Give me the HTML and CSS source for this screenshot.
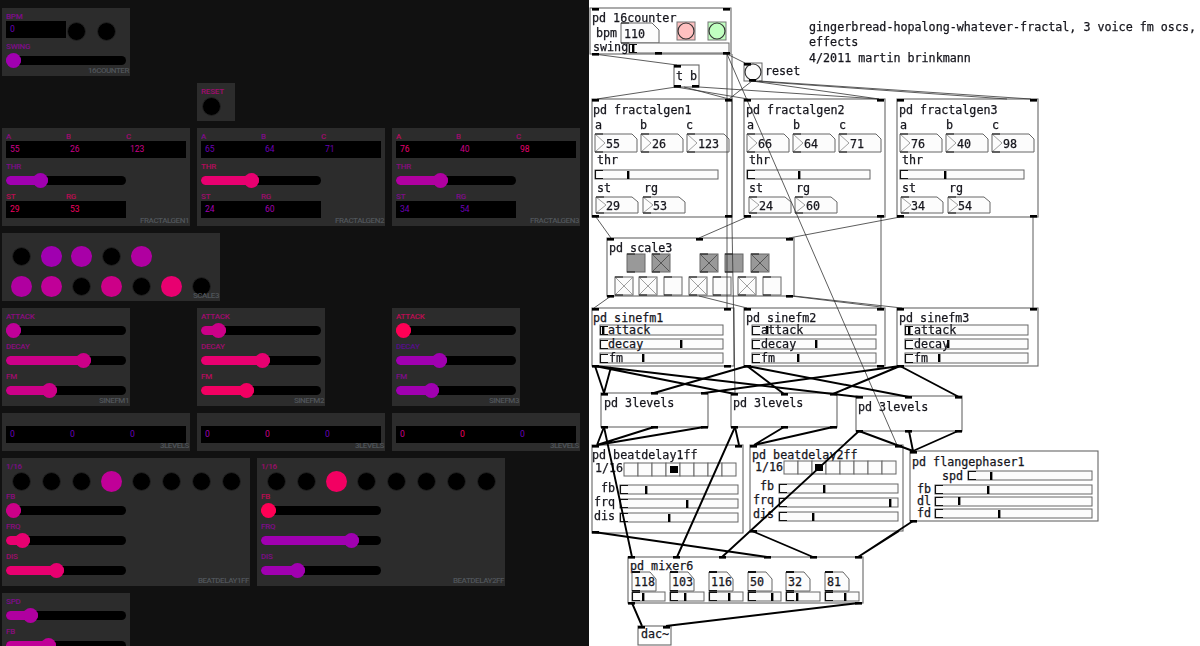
FILE: index.html
```html
<!DOCTYPE html>
<html lang="en">
<head>
<meta charset="UTF-8" />
<title>gingerbread fractal patch</title>
<link rel="stylesheet" href="styles.css">
</head>
<body>

<!-- control surface -->
<div class="ui">

  <div class="row">
    <div class="panel w128">
      <div class="line">
        <div class="fld"><span class="lbl c1">BPM</span><span class="val c0">0</span></div>
        <div class="cell left"><span class="dot"></span></div>
        <div class="cell left"><span class="dot"></span></div>
      </div>
      <div class="ctl"><span class="lbl c1">SWING</span><div class="slider"><div class="fill c1" style="width:15px"></div></div></div>
      <span class="tag">16COUNTER</span>
    </div>
  </div>

  <div class="row">
    <div class="panel w38 col2">
      <div class="line">
        <div class="cell left"><span class="lbl lbl-abs c3">RESET</span><span class="dot"></span></div>
      </div>
    </div>
  </div>

  <div class="row">
    <div class="panel">
      <div class="line">
        <div class="fld"><span class="lbl c2">A</span><span class="val c3">55</span></div>
        <div class="fld"><span class="lbl c3">B</span><span class="val c3">26</span></div>
        <div class="fld"><span class="lbl c3">C</span><span class="val c3">123</span></div>
      </div>
      <div class="ctl"><span class="lbl c1">THR</span><div class="slider"><div class="fill c1" style="width:42px"></div></div></div>
      <div class="line">
        <div class="fld"><span class="lbl c5">ST</span><span class="val c5">29</span></div>
        <div class="fld"><span class="lbl c5">RG</span><span class="val c5">53</span></div>
      </div>
      <span class="tag">FRACTALGEN1</span>
    </div>
    <div class="panel">
      <div class="line">
        <div class="fld"><span class="lbl c1">A</span><span class="val c0">65</span></div>
        <div class="fld"><span class="lbl c1">B</span><span class="val c0">64</span></div>
        <div class="fld"><span class="lbl c3">C</span><span class="val c0">71</span></div>
      </div>
      <div class="ctl"><span class="lbl c4">THR</span><div class="slider"><div class="fill c4" style="width:58px"></div></div></div>
      <div class="line">
        <div class="fld"><span class="lbl c3">ST</span><span class="val c1">24</span></div>
        <div class="fld"><span class="lbl c3">RG</span><span class="val c1">60</span></div>
      </div>
      <span class="tag">FRACTALGEN2</span>
    </div>
    <div class="panel">
      <div class="line">
        <div class="fld"><span class="lbl c4">A</span><span class="val c4">76</span></div>
        <div class="fld"><span class="lbl c3">B</span><span class="val c3">40</span></div>
        <div class="fld"><span class="lbl c3">C</span><span class="val c4">98</span></div>
      </div>
      <div class="ctl"><span class="lbl c2">THR</span><div class="slider"><div class="fill c2" style="width:52px"></div></div></div>
      <div class="line">
        <div class="fld"><span class="lbl c1">ST</span><span class="val c0">34</span></div>
        <div class="fld"><span class="lbl c1">RG</span><span class="val c0">54</span></div>
      </div>
      <span class="tag">FRACTALGEN3</span>
    </div>
  </div>

  <div class="row">
    <div class="panel w218">
      <div class="line">
        <div class="cell"><span class="dot"></span></div>
        <div class="cell"><span class="dot on c1"></span></div>
        <div class="cell"><span class="dot on c1b"></span></div>
        <div class="cell"><span class="dot"></span></div>
        <div class="cell"><span class="dot on c2"></span></div>
      </div>
      <div class="line">
        <div class="cell"><span class="dot on c2"></span></div>
        <div class="cell"><span class="dot on c2b"></span></div>
        <div class="cell"><span class="dot"></span></div>
        <div class="cell"><span class="dot on c3"></span></div>
        <div class="cell"><span class="dot"></span></div>
        <div class="cell"><span class="dot on c4"></span></div>
        <div class="cell"><span class="dot"></span></div>
      </div>
      <span class="tag">SCALE3</span>
    </div>
  </div>

  <div class="row">
    <div class="panel w128">
      <div class="ctl"><span class="lbl c2">ATTACK</span><div class="slider"><div class="fill c2b" style="width:15px"></div></div></div>
      <div class="ctl"><span class="lbl c2">DECAY</span><div class="slider"><div class="fill c3" style="width:85px"></div></div></div>
      <div class="ctl"><span class="lbl c3">FM</span><div class="slider"><div class="fill c3" style="width:51px"></div></div></div>
      <span class="tag">SINEFM1</span>
    </div>
    <div class="panel w128">
      <div class="ctl"><span class="lbl c3">ATTACK</span><div class="slider"><div class="fill c3" style="width:25px"></div></div></div>
      <div class="ctl"><span class="lbl c3">DECAY</span><div class="slider"><div class="fill c4" style="width:69px"></div></div></div>
      <div class="ctl"><span class="lbl c4">FM</span><div class="slider"><div class="fill c5" style="width:53px"></div></div></div>
      <span class="tag">SINEFM2</span>
    </div>
    <div class="panel w128">
      <div class="ctl"><span class="lbl c5">ATTACK</span><div class="slider"><div class="fill c6" style="width:15px"></div></div></div>
      <div class="ctl"><span class="lbl c0">DECAY</span><div class="slider"><div class="fill c1" style="width:51px"></div></div></div>
      <div class="ctl"><span class="lbl c1">FM</span><div class="slider"><div class="fill c1" style="width:43px"></div></div></div>
      <span class="tag">SINEFM3</span>
    </div>
  </div>

  <div class="row">
    <div class="panel">
      <div class="line">
        <div class="fld"><span class="lbl"></span><span class="val c0">0</span></div>
        <div class="fld"><span class="lbl"></span><span class="val c0">0</span></div>
        <div class="fld"><span class="lbl"></span><span class="val c0">0</span></div>
      </div>
      <span class="tag">3LEVELS</span>
    </div>
    <div class="panel">
      <div class="line">
        <div class="fld"><span class="lbl"></span><span class="val c1">0</span></div>
        <div class="fld"><span class="lbl"></span><span class="val c3">0</span></div>
        <div class="fld"><span class="lbl"></span><span class="val c0">0</span></div>
      </div>
      <span class="tag">3LEVELS</span>
    </div>
    <div class="panel">
      <div class="line">
        <div class="fld"><span class="lbl"></span><span class="val c3">0</span></div>
        <div class="fld"><span class="lbl"></span><span class="val c5">0</span></div>
        <div class="fld"><span class="lbl"></span><span class="val c0">0</span></div>
      </div>
      <span class="tag">3LEVELS</span>
    </div>
  </div>

  <div class="row row-flex">
    <div class="panel w248">
      <div class="line">
        <span class="lbl lbl-abs c1">1/16</span>
        <div class="cell"><span class="dot"></span></div>
        <div class="cell"><span class="dot"></span></div>
        <div class="cell"><span class="dot"></span></div>
        <div class="cell"><span class="dot on c2b"></span></div>
        <div class="cell"><span class="dot"></span></div>
        <div class="cell"><span class="dot"></span></div>
        <div class="cell"><span class="dot"></span></div>
        <div class="cell"><span class="dot"></span></div>
      </div>
      <div class="ctl"><span class="lbl c2">FB</span><div class="slider"><div class="fill c3" style="width:15px"></div></div></div>
      <div class="ctl"><span class="lbl c2">FRQ</span><div class="slider"><div class="fill c4" style="width:24px"></div></div></div>
      <div class="ctl"><span class="lbl c3">DIS</span><div class="slider"><div class="fill c4" style="width:58px"></div></div></div>
      <span class="tag">BEATDELAY1FF</span>
    </div>
    <div class="panel w248">
      <div class="line">
        <span class="lbl lbl-abs c3">1/16</span>
        <div class="cell"><span class="dot"></span></div>
        <div class="cell"><span class="dot"></span></div>
        <div class="cell"><span class="dot on c5"></span></div>
        <div class="cell"><span class="dot"></span></div>
        <div class="cell"><span class="dot"></span></div>
        <div class="cell"><span class="dot"></span></div>
        <div class="cell"><span class="dot"></span></div>
        <div class="cell"><span class="dot"></span></div>
      </div>
      <div class="ctl"><span class="lbl c5">FB</span><div class="slider"><div class="fill c6" style="width:15px"></div></div></div>
      <div class="ctl"><span class="lbl c1">FRQ</span><div class="slider"><div class="fill c1" style="width:98px"></div></div></div>
      <div class="ctl"><span class="lbl c1">DIS</span><div class="slider"><div class="fill c1" style="width:44px"></div></div></div>
      <span class="tag">BEATDELAY2FF</span>
    </div>
  </div>

  <div class="row">
    <div class="panel w128">
      <div class="ctl"><span class="lbl c1">SPD</span><div class="slider"><div class="fill c2" style="width:32px"></div></div></div>
      <div class="ctl"><span class="lbl c2">FB</span><div class="slider"><div class="fill c2b" style="width:50px"></div></div></div>
    </div>
  </div>

</div>

<!-- pd patch, a free canvas: boxes first, then wires and ports on top -->
<div class="patch">
<svg class="canvas" width="611" height="646" viewBox="0 0 611 646">
  <defs>
    <path id="br" class="mark" d="M8 .5H.5V8.5H8"/>
    <g id="n18"><path class="w" d="M0 0H37L42 5V18H0Z"/><path class="tri" d="M0 0L10 9L0 18"/><path class="mark" d="M0 0H8M0 18H8"/></g>
    <g id="n16"><path class="w" d="M0 0H36L42 5V16H0Z"/><path class="tri" d="M0 0L10 8L0 16"/><path class="mark" d="M0 0H8M0 16H8"/></g>
    <g id="n24"><path class="w" d="M0 0H18L24 7V19H0Z"/><path class="mark thickmark" d="M0 0H8M0 19H8"/></g>
    <g id="tg"><rect class="w" width="18" height="18"/><path class="mark" d="M0 0H8M0 18H8"/></g>
    <g id="tgx"><rect class="w" width="18" height="18"/><path class="tri" d="M1 1L17 17M17 1L1 17"/><path class="mark" d="M0 0H8M0 18H8"/></g>
    <g id="tgd"><rect class="g" width="18" height="18"/><path class="mark" d="M0 0H8M0 18H8"/></g>
    <g id="tgdx"><rect class="g" width="18" height="18"/><path class="tri dark" d="M1 1L17 17M17 1L1 17"/><path class="mark" d="M0 0H8M0 18H8"/></g>
    <rect id="c" class="w" width="14" height="13"/>
    <rect id="p" class="port" width="7" height="2.6"/>
    <rect id="hd" class="port" width="2.4" height="8"/>
  </defs>

  <text class="t" x="220" y="31">gingerbread-hopalong-whatever-fractal, 3 voice fm oscs,</text>
  <text class="t" x="220" y="46">effects</text>
  <text class="t" x="220" y="62">4/2011 martin brinkmann</text>

  <!-- 16counter -->
  <rect class="box" x="1" y="8" width="141" height="46"/>
  <text class="t" x="3" y="22">pd 16counter</text>
  <text class="t" x="7" y="37">bpm</text>
  <path class="w" d="M32 23H63L70 30V43H32Z"/>
  <path class="mark" d="M32 23H40M32 43H40"/>
  <text class="t" x="35" y="38">110</text>
  <rect class="pink" x="88" y="22" width="18" height="18"/><circle class="pink round" cx="97" cy="31" r="8"/>
  <rect class="mint" x="119" y="22" width="18" height="18"/><circle class="mint round" cx="128" cy="31" r="8"/>
  <rect class="w" x="40" y="43" width="100" height="10"/>
  <use href="#br" x="40" y="44"/><use href="#hd" x="43" y="44"/>
  <text class="t" x="4" y="51">swing</text>

  <rect class="box" x="85" y="65" width="25" height="22"/>
  <text class="t" x="87" y="80">t b</text>
  <rect class="w" x="155" y="63" width="18" height="18"/><circle class="w round" cx="164" cy="72" r="8"/>
  <text class="t" x="176" y="75">reset</text>

  <!-- fractalgen1 -->
  <rect class="box" x="3" y="99" width="140" height="118"/>
  <text class="t" x="4" y="114">pd fractalgen1</text>
  <text class="t" x="6" y="129">a</text><text class="t" x="51" y="129">b</text><text class="t" x="97" y="129">c</text>
  <use href="#n18" x="6" y="134"/><text class="t" x="17" y="148">55</text>
  <use href="#n18" x="52" y="134"/><text class="t" x="63" y="148">26</text>
  <use href="#n18" x="98" y="134"/><text class="t" x="109" y="148">123</text>
  <text class="t" x="8" y="164">thr</text>
  <rect class="w" x="6" y="170" width="123" height="9"/><use href="#br" x="6" y="170"/><use href="#hd" x="38" y="171"/>
  <text class="t" x="8" y="192">st</text><text class="t" x="55" y="192">rg</text>
  <use href="#n16" x="7" y="197"/><text class="t" x="17" y="210">29</text>
  <use href="#n16" x="54" y="197"/><text class="t" x="64" y="210">53</text>

  <!-- fractalgen2 -->
  <rect class="box" x="155" y="99" width="141" height="118"/>
  <text class="t" x="157" y="114">pd fractalgen2</text>
  <text class="t" x="158" y="129">a</text><text class="t" x="204" y="129">b</text><text class="t" x="250" y="129">c</text>
  <use href="#n18" x="158" y="134"/><text class="t" x="169" y="148">66</text>
  <use href="#n18" x="204" y="134"/><text class="t" x="215" y="148">64</text>
  <use href="#n18" x="250" y="134"/><text class="t" x="261" y="148">71</text>
  <text class="t" x="160" y="164">thr</text>
  <rect class="w" x="158" y="170" width="123" height="9"/><use href="#br" x="158" y="170"/><use href="#hd" x="209" y="171"/>
  <text class="t" x="160" y="192">st</text><text class="t" x="207" y="192">rg</text>
  <use href="#n16" x="160" y="197"/><text class="t" x="170" y="210">24</text>
  <use href="#n16" x="206" y="197"/><text class="t" x="217" y="210">60</text>

  <!-- fractalgen3 -->
  <rect class="box" x="308" y="99" width="141" height="118"/>
  <text class="t" x="310" y="114">pd fractalgen3</text>
  <text class="t" x="311" y="129">a</text><text class="t" x="357" y="129">b</text><text class="t" x="403" y="129">c</text>
  <use href="#n18" x="311" y="134"/><text class="t" x="322" y="148">76</text>
  <use href="#n18" x="357" y="134"/><text class="t" x="368" y="148">40</text>
  <use href="#n18" x="403" y="134"/><text class="t" x="414" y="148">98</text>
  <text class="t" x="313" y="164">thr</text>
  <rect class="w" x="311" y="170" width="124" height="9"/><use href="#br" x="311" y="170"/><use href="#hd" x="355" y="171"/>
  <text class="t" x="313" y="192">st</text><text class="t" x="360" y="192">rg</text>
  <use href="#n16" x="312" y="197"/><text class="t" x="322" y="210">34</text>
  <use href="#n16" x="359" y="197"/><text class="t" x="369" y="210">54</text>

  <!-- scale3 -->
  <rect class="box" x="18" y="238" width="187" height="58"/>
  <text class="t" x="20" y="252">pd scale3</text>
  <use href="#tgd" x="38" y="254"/><use href="#tgdx" x="63" y="254"/><use href="#tgdx" x="111" y="254"/><use href="#tgd" x="136" y="254"/><use href="#tgdx" x="162" y="254"/>
  <use href="#tgx" x="26" y="277"/><use href="#tgx" x="50" y="277"/><use href="#tg" x="75" y="277"/><use href="#tgx" x="100" y="277"/><use href="#tg" x="124" y="277"/><use href="#tgx" x="149" y="277"/><use href="#tg" x="174" y="277"/>

  <!-- sinefm1 -->
  <rect class="box" x="3" y="308" width="142" height="58"/>
  <text class="t" x="4" y="322">pd sinefm1</text>
  <rect class="w" x="11" y="325" width="123" height="10"/><use href="#br" x="11" y="326"/><use href="#hd" x="13" y="326"/><text class="t" x="19" y="334">attack</text>
  <rect class="w" x="11" y="339" width="123" height="10"/><use href="#br" x="11" y="340"/><use href="#hd" x="91" y="340"/><text class="t" x="19" y="348">decay</text>
  <rect class="w" x="11" y="353" width="123" height="10"/><use href="#br" x="11" y="354"/><use href="#hd" x="53" y="354"/><text class="t" x="20" y="362">fm</text>

  <!-- sinefm2 -->
  <rect class="box" x="155" y="308" width="141" height="58"/>
  <text class="t" x="157" y="322">pd sinefm2</text>
  <rect class="w" x="163" y="325" width="124" height="10"/><use href="#br" x="163" y="326"/><use href="#hd" x="177" y="326"/><text class="t" x="172" y="334">attack</text>
  <rect class="w" x="163" y="339" width="124" height="10"/><use href="#br" x="163" y="340"/><use href="#hd" x="226" y="340"/><text class="t" x="172" y="348">decay</text>
  <rect class="w" x="163" y="353" width="124" height="10"/><use href="#br" x="163" y="354"/><use href="#hd" x="208" y="354"/><text class="t" x="172" y="362">fm</text>

  <!-- sinefm3 -->
  <rect class="box" x="308" y="308" width="141" height="58"/>
  <text class="t" x="310" y="322">pd sinefm3</text>
  <rect class="w" x="316" y="325" width="123" height="10"/><use href="#br" x="316" y="326"/><use href="#hd" x="319" y="326"/><text class="t" x="325" y="334">attack</text>
  <rect class="w" x="316" y="339" width="123" height="10"/><use href="#br" x="316" y="340"/><use href="#hd" x="358" y="340"/><text class="t" x="325" y="348">decay</text>
  <rect class="w" x="316" y="353" width="123" height="10"/><use href="#br" x="316" y="354"/><use href="#hd" x="349" y="354"/><text class="t" x="325" y="362">fm</text>

  <!-- 3levels -->
  <rect class="box" x="12" y="393" width="107" height="34"/>
  <text class="t" x="15" y="407">pd 3levels</text>
  <rect class="box" x="142" y="393" width="106" height="34"/>
  <text class="t" x="144" y="407">pd 3levels</text>
  <rect class="box" x="267" y="396" width="106" height="35"/>
  <text class="t" x="269" y="411">pd 3levels</text>

  <!-- beatdelay1ff -->
  <rect class="box" x="3" y="445" width="151" height="88"/>
  <text class="t" x="3" y="459">pd beatdelay1ff</text>
  <text class="t" x="6" y="472">1/16</text>
  <use href="#c" x="35" y="463"/><use href="#c" x="49" y="463"/><use href="#c" x="63" y="463"/><use href="#c" x="77" y="463"/><use href="#c" x="91" y="463"/><use href="#c" x="105" y="463"/><use href="#c" x="119" y="463"/><use href="#c" x="133" y="463"/>
  <rect class="port" x="81" y="466" width="8" height="7"/>
  <text class="t end" x="26" y="492">fb</text>
  <rect class="w" x="31" y="485" width="118" height="9"/><use href="#br" x="31" y="485"/><use href="#hd" x="56" y="486"/>
  <text class="t end" x="26" y="506">frq</text>
  <rect class="w" x="31" y="499" width="118" height="9"/><use href="#br" x="31" y="499"/><use href="#hd" x="97" y="500"/>
  <text class="t end" x="26" y="520">dis</text>
  <rect class="w" x="31" y="513" width="118" height="9"/><use href="#br" x="31" y="513"/><use href="#hd" x="79" y="514"/>

  <!-- beatdelay2ff -->
  <rect class="box" x="161" y="445" width="153" height="86"/>
  <text class="t" x="163" y="459">pd beatdelay2ff</text>
  <text class="t" x="166" y="471">1/16</text>
  <use href="#c" x="195" y="461"/><use href="#c" x="209" y="461"/><use href="#c" x="223" y="461"/><use href="#c" x="237" y="461"/><use href="#c" x="251" y="461"/><use href="#c" x="265" y="461"/><use href="#c" x="279" y="461"/><use href="#c" x="293" y="461"/>
  <rect class="port" x="226" y="464" width="8" height="7"/>
  <text class="t end" x="185" y="490">fb</text>
  <rect class="w" x="190" y="484" width="119" height="9"/><use href="#br" x="190" y="484"/><use href="#hd" x="234" y="485"/>
  <text class="t end" x="185" y="504">frq</text>
  <rect class="w" x="190" y="498" width="119" height="9"/><use href="#br" x="190" y="498"/><use href="#hd" x="300" y="499"/>
  <text class="t end" x="185" y="518">dis</text>
  <rect class="w" x="190" y="512" width="119" height="9"/><use href="#br" x="190" y="512"/><use href="#hd" x="223" y="513"/>

  <!-- flangephaser1 -->
  <rect class="box" x="321" y="451" width="188" height="70"/>
  <text class="t" x="323" y="466">pd flangephaser1</text>
  <text class="t end" x="374" y="480">spd</text>
  <rect class="w" x="379" y="471" width="124" height="9"/><use href="#br" x="379" y="471"/><use href="#hd" x="401" y="472"/>
  <text class="t end" x="342" y="493">fb</text>
  <rect class="w" x="346" y="485" width="157" height="9"/><use href="#br" x="346" y="485"/><use href="#hd" x="398" y="486"/>
  <text class="t end" x="342" y="505">dl</text>
  <rect class="w" x="346" y="497" width="157" height="9"/><use href="#br" x="346" y="497"/><use href="#hd" x="369" y="497"/>
  <text class="t end" x="342" y="517">fd</text>
  <rect class="w" x="346" y="509" width="157" height="9"/><use href="#br" x="346" y="509"/><use href="#hd" x="409" y="510"/>

  <!-- mixer6 -->
  <rect class="box" x="39" y="557" width="235" height="46"/>
  <text class="t" x="41" y="570">pd mixer6</text>
  <use href="#n24" x="43" y="572"/><text class="t" x="45" y="586">118</text>
  <use href="#n24" x="81" y="572"/><text class="t" x="83" y="586">103</text>
  <use href="#n24" x="120" y="572"/><text class="t" x="122" y="586">116</text>
  <use href="#n24" x="159" y="572"/><text class="t" x="161" y="586">50</text>
  <use href="#n24" x="197" y="572"/><text class="t" x="199" y="586">32</text>
  <use href="#n24" x="236" y="572"/><text class="t" x="238" y="586">81</text>
  <rect class="w" x="43" y="592" width="33" height="9"/><use href="#br" x="43" y="592"/><use href="#hd" x="53" y="593"/>
  <rect class="w" x="81" y="592" width="34" height="9"/><use href="#br" x="81" y="592"/><use href="#hd" x="95" y="593"/>
  <rect class="w" x="120" y="592" width="34" height="9"/><use href="#br" x="120" y="592"/><use href="#hd" x="139" y="593"/>
  <rect class="w" x="159" y="592" width="33" height="9"/><use href="#br" x="159" y="592"/><use href="#hd" x="182" y="593"/>
  <rect class="w" x="197" y="592" width="34" height="9"/><use href="#br" x="197" y="592"/><use href="#hd" x="207" y="593"/>
  <rect class="w" x="236" y="592" width="34" height="9"/><use href="#br" x="236" y="592"/><use href="#hd" x="255" y="593"/>

  <rect class="box" x="49" y="626" width="33" height="19"/>
  <text class="t" x="52" y="638">dac~</text>

  <!-- message wires -->
  <g class="thin">
    <path d="M5 54L88 65M138 54L156 63"/>
    <path d="M138 54V308M143 54V225L146 393"/>
    <path d="M138 54L308 445"/>
    <path d="M87 87L8 99M95 87L140 99M110 87L290 99M87 87L159 99"/>
    <path d="M163 81L140 99M163 81L290 99M163 81L418 99M170 81L442 99"/>
    <path d="M7 217L22 238M158 217L110 238M311 217L200 238"/>
    <path d="M22 296L5 308M110 296L158 308M202 296L292 307M205 296L313 308"/>
    <path d="M292 217V308M444 217V308"/>
  </g>

  <!-- signal wires -->
  <g class="thick">
    <path d="M6 366L15 393M6 366L146 394M6 366L270 397M22 367L15 393"/>
    <path d="M158 366L65 393M158 366L195 394M158 366L320 397"/>
    <path d="M311 366L115 393M311 366L244 394M311 366L370 397"/>
    <path d="M15 427L8 445M65 427L8 445M115 427L8 445"/>
    <path d="M15 427L43 557M146 427L88 557M270 431L133 557"/>
    <path d="M195 427L165 445M244 427L165 445M146 427L150 445"/>
    <path d="M320 431L324 451M369 431L324 451M270 431L324 451"/>
    <path d="M5 532L178 557M163 531L224 557M310 531L269 557M324 521L269 557"/>
    <path d="M43 603L53 626M270 603L77 626"/>
  </g>

  <!-- ports -->
  <use href="#p" x="3" y="8"/><use href="#p" x="134" y="8"/><use href="#p" x="3" y="53"/><use href="#p" x="66" y="52"/><use href="#p" x="134" y="52"/>
  <use href="#p" x="85" y="65"/><use href="#p" x="85" y="85"/><use href="#p" x="103" y="85"/>
  <use href="#p" x="155" y="63"/><use href="#p" x="160" y="79"/>
  <use href="#p" x="3" y="99"/><use href="#p" x="136" y="99"/><use href="#p" x="3" y="215"/><use href="#p" x="136" y="215"/>
  <use href="#p" x="155" y="99"/><use href="#p" x="288" y="99"/><use href="#p" x="155" y="215"/><use href="#p" x="288" y="215"/>
  <use href="#p" x="308" y="99"/><use href="#p" x="441" y="99"/><use href="#p" x="308" y="215"/><use href="#p" x="441" y="215"/>
  <use href="#p" x="18" y="238"/><use href="#p" x="107" y="238"/><use href="#p" x="197" y="238"/><use href="#p" x="18" y="295"/><use href="#p" x="197" y="295"/>
  <use href="#p" x="3" y="308"/><use href="#p" x="135" y="308"/><use href="#p" x="3" y="365"/><use href="#p" x="135" y="365"/>
  <use href="#p" x="155" y="308"/><use href="#p" x="288" y="308"/><use href="#p" x="155" y="365"/><use href="#p" x="288" y="365"/>
  <use href="#p" x="308" y="308"/><use href="#p" x="441" y="308"/><use href="#p" x="308" y="365"/>
  <use href="#p" x="12" y="393"/><use href="#p" x="62" y="392"/><use href="#p" x="112" y="392"/><use href="#p" x="12" y="426"/><use href="#p" x="62" y="426"/><use href="#p" x="112" y="426"/>
  <use href="#p" x="142" y="393"/><use href="#p" x="192" y="393"/><use href="#p" x="241" y="393"/><use href="#p" x="142" y="426"/><use href="#p" x="192" y="426"/><use href="#p" x="241" y="426"/>
  <use href="#p" x="267" y="396"/><use href="#p" x="316" y="396"/><use href="#p" x="366" y="396"/><use href="#p" x="267" y="430"/><use href="#p" x="316" y="430"/><use href="#p" x="366" y="430"/>
  <use href="#p" x="3" y="445"/><use href="#p" x="146" y="445"/><use href="#p" x="3" y="531"/><use href="#p" x="161" y="445"/><use href="#p" x="306" y="445"/><use href="#p" x="161" y="530"/>
  <use href="#p" x="321" y="451"/><use href="#p" x="321" y="520"/>
  <use href="#p" x="39" y="556"/><use href="#p" x="84" y="556"/><use href="#p" x="130" y="556"/><use href="#p" x="175" y="556"/><use href="#p" x="221" y="556"/><use href="#p" x="266" y="556"/>
  <use href="#p" x="39" y="602"/><use href="#p" x="266" y="602"/>
  <use href="#p" x="49" y="626"/><use href="#p" x="74" y="626"/>
</svg>
</div>

</body>
</html>
```

FILE: styles.css
```css
html, body {
  margin: 0;
  padding: 0;
  height: 100%;
  overflow: hidden;
}
body {
  display: flex;
  font-family: Roboto, "Liberation Sans", sans-serif;
  background: #fff;
}

/* left side, control surface */
.ui {
  width: 589px;
  height: 646px;
  flex: none;
  box-sizing: border-box;
  padding: 8px 0 0 2px;
  background: #111;
  overflow: hidden;
  display: flex;
  flex-direction: column;
  gap: 7px;
}
.row {
  display: grid;
  grid-template-columns: repeat(3, 188px);
  column-gap: 7px;
  align-items: start;
}
.row-flex {
  display: flex;
}
.panel {
  position: relative;
  box-sizing: border-box;
  padding: 4px;
  background: #2c2c2c;
  display: flex;
  flex-direction: column;
  flex: none;
}
.w38 { width: 38px; }
.w128 { width: 128px; }
.w218 { width: 218px; grid-column: span 2; }
.w248 { width: 248px; }
.col2 { grid-column: 2; }

.line {
  position: relative;
  display: flex;
  height: 30px;
}
.ctl {
  height: 30px;
  width: 120px;
}
.lbl {
  display: block;
  height: 9px;
  font-size: 8px;
  font-weight: 500;
  line-height: 9px;
  letter-spacing: -0.2px;
  color: var(--c);
  opacity: 0.72;
  white-space: nowrap;
}
.lbl-abs {
  position: absolute;
  top: 0;
  left: 0;
}
.fld {
  width: 60px;
  flex: none;
}
.val {
  display: block;
  box-sizing: border-box;
  height: 17px;
  padding-left: 4px;
  font-size: 8.5px;
  line-height: 17px;
  background: #000;
  color: var(--c);
}
.tag {
  position: absolute;
  right: 1px;
  bottom: 0;
  height: 10px;
  font-size: 8px;
  font-weight: 500;
  line-height: 10px;
  letter-spacing: -0.45px;
  color: #50555a;
  white-space: nowrap;
}

.cell {
  position: relative;
  box-sizing: border-box;
  width: 30px;
  height: 30px;
  padding-top: 9px;
  flex: none;
  display: flex;
  justify-content: center;
  align-items: center;
}
.cell.left {
  justify-content: flex-start;
  padding-left: 1px;
}
.dot {
  display: block;
  width: 19px;
  height: 19px;
  box-sizing: border-box;
  border-radius: 50%;
  border: 1px solid #222;
  background: #000;
}
.dot.on {
  width: 21px;
  height: 21px;
  border: none;
  background: var(--c);
}

.slider {
  position: relative;
  margin-top: 4.5px;
  height: 9.5px;
  border-radius: 5px;
  background: #000;
}
.fill {
  position: relative;
  height: 100%;
  border-radius: 5px;
  background: var(--c);
}
.fill::after {
  content: "";
  position: absolute;
  right: 0;
  top: -2.75px;
  width: 15px;
  height: 15px;
  border-radius: 50%;
  background: var(--c);
}

/* value colours, purple to red */
.c0 { --c: #6a00b4; }
.c1 { --c: #a000b0; }
.c1b { --c: #a800a8; }
.c2 { --c: #b000a0; }
.c2b { --c: #c00098; }
.c3 { --c: #cc0088; }
.c4 { --c: #e80070; }
.c5 { --c: #f20062; }
.c6 { --c: #ff0055; }

/* right side, patch canvas */
.patch {
  flex: 1;
  height: 646px;
  background: #fff;
  overflow: hidden;
}
.canvas {
  display: block;
  filter: blur(0.4px);
}
.t {
  font-family: "DejaVu Sans Mono", monospace;
  font-size: 11.7px;
  fill: #15151c;
  stroke: #15151c;
  stroke-width: 0.25px;
}
.end { text-anchor: end; }
.box {
  fill: #fff;
  stroke: #666;
  stroke-width: 1.1px;
}
.w {
  fill: #fcfcfc;
  stroke: #666;
  stroke-width: 1px;
}
.g {
  fill: #999;
  stroke: #666;
  stroke-width: 1px;
}
.pink { fill: #ffc0c0; stroke: #777; }
.mint { fill: #c0ffc0; stroke: #777; }
.round { stroke: #333; stroke-width: 1.2px; }
.mark {
  fill: none;
  stroke: #111;
  stroke-width: 1.1px;
}
.thickmark { stroke-width: 1.8px; }
.tri {
  fill: none;
  stroke: #888;
  stroke-width: 0.8px;
}
.tri.dark { stroke: #444; }
.port { fill: #000; }
.thin path {
  fill: none;
  stroke: #333;
  stroke-width: 0.8px;
}
.thick path {
  fill: none;
  stroke: #000;
  stroke-width: 1.9px;
}
```
